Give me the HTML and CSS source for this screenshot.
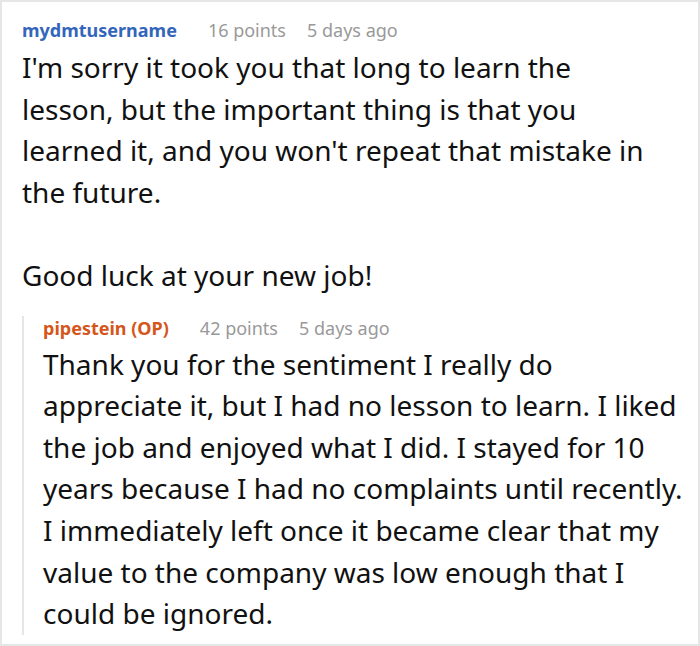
FILE: index.html
```html
<!DOCTYPE html>
<html>
<head>
<meta charset="utf-8">
<link rel="stylesheet" href="styles.css">
</head>
<body>
<div class="thread">
  <div class="comment">
    <div class="meta">
      <span class="author">mydmtusername</span>
      <span class="info">16 points</span>
      <span class="info">5 days ago</span>
    </div>
    <div class="body main">
      <p>I'm sorry it took you that long to learn the lesson, but the important thing is that you learned it, and you won't repeat that mistake in the future.</p>
      <p>Good luck at your new job!</p>
    </div>
    <div class="reply">
      <div class="meta">
        <span class="author op">pipestein (OP)</span>
        <span class="info">42 points</span>
        <span class="info">5 days ago</span>
      </div>
      <div class="body sub">
        <p>Thank you for the sentiment I really do appreciate it, but I had no lesson to learn. I liked the job and enjoyed what I did. I stayed for 10 years because I had no complaints until recently. I immediately left once it became clear that my value to the company was low enough that I could be ignored.</p>
      </div>
    </div>
  </div>
</div>
</body>
</html>
```
FILE: styles.css
```css
html, body {
  margin: 0;
  padding: 0;
  background: #fff;
}
.thread {
  width: 700px;
  height: 646px;
  box-sizing: border-box;
  border: 2px solid #e6e6e6;
  overflow: hidden;
  font-family: "Noto Sans", "Open Sans", sans-serif;
  color: #111;
}
.comment {
  padding: 16px 0 0 20px;
}
.meta {
  display: flex;
  gap: 21px;
  font-size: 18px;
  line-height: 24px;
  white-space: nowrap;
}
.author {
  font-weight: 700;
  color: #3366bb;
  margin-right: 10px;
}
.author.op {
  color: #d4561b;
}
.info {
  color: #999;
}
.body {
  font-size: 28px;
  line-height: 41.6px;
  margin-top: 5px;
}
.body p {
  margin: 0 0 41.6px 0;
}
.body p:last-child {
  margin-bottom: 0;
}
.main {
  width: 628px;
}
.reply {
  margin-top: 28px;
  border-left: 2px solid #e6e6e6;
  padding-left: 19px;
}
.reply .meta {
  margin-top: -9px;
}
.sub {
  width: 645px;
  margin-top: 4px;
  margin-bottom: -10px;
}
```
